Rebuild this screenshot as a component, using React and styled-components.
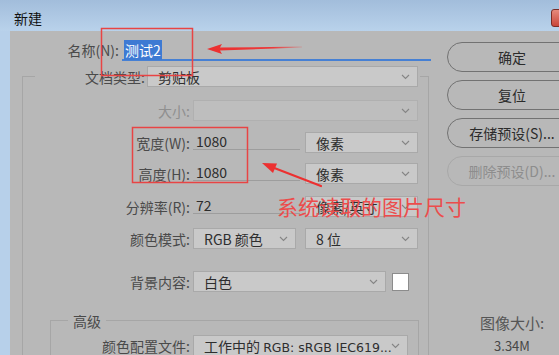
import styled, { createGlobalStyle } from "styled-components";

const GlobalStyle = createGlobalStyle`
  html, body { margin: 0; padding: 0; background: #b8b8b8; }
  body {
    width: 559px;
    height: 355px;
    overflow: hidden;
    font-family: "Noto Sans CJK SC", "Noto Sans", sans-serif;
  }
  * { box-sizing: border-box; }
`;

const Window = styled.div`
  position: relative;
  width: 559px;
  height: 355px;
  overflow: hidden;
  background: #b7d0ea;
  display: flex;
  flex-direction: column;
`;

const TitleBar = styled.div`
  height: 31px;
  flex-shrink: 0;
  display: flex;
  align-items: flex-start;
  padding: 8px 0 0 14px;
  background: linear-gradient(to bottom, #a2bddb, #b9d2eb);
  overflow: hidden;
`;

const Title = styled.span`
  font-size: 14px;
  line-height: 20px;
  color: #111;
`;

const CloseButton = styled.div`
  flex-shrink: 0;
  width: 30px;
  height: 18px;
  margin: 1px -22px 0 auto;
  border: 1px solid #7b2c26;
  border-radius: 3px;
  background: linear-gradient(to bottom, #e6897c, #c9453a);
`;

const Body = styled.div`
  flex: 1;
  margin-left: 10px;
  background: #b8b8b8;
  display: flex;
  overflow: hidden;
`;

const LeftPane = styled.div`
  width: 437px;
  flex-shrink: 0;
  padding-top: 10px;
  display: flex;
  flex-direction: column;
`;

const RightPane = styled.div`
  width: 130px;
  flex-shrink: 0;
  padding-top: 11px;
  display: flex;
  flex-direction: column;
`;

const NameRow = styled.div`
  display: flex;
  align-items: flex-start;
  height: 20px;
`;

const Label = styled.span`
  width: ${(p) => p.$w}px;
  flex-shrink: 0;
  text-align: right;
  font-size: 14px;
  line-height: 18px;
  white-space: nowrap;
  color: ${(p) => (p.$disabled ? "#8f8f8f" : "#4a4a4a")};
`;

const NameInput = styled.div`
  width: 309px;
  height: 20px;
  margin-left: 3px;
  padding: 1px 0 0 2px;
  border-bottom: 2px solid #4680d4;
  font-size: 14px;
  line-height: 16px;
`;

const Selected = styled.span`
  background: #3d7ad3;
  color: #fff;
  padding: 0 1px;
`;

const Group = styled.fieldset`
  width: ${(p) => p.$w}px;
  margin: ${(p) => p.$m};
  padding: ${(p) => p.$p};
  min-inline-size: 0;
  border: 1px solid #a6a6a6;
  border-bottom: none;
`;

const Legend = styled.legend`
  margin-left: ${(p) => p.$ml}px;
  padding: 0 ${(p) => p.$px}px;
`;

const LegendRow = styled.div`
  display: flex;
  align-items: center;
  gap: 2px;
`;

const LegendText = styled.span`
  font-size: 14px;
  line-height: 20px;
  color: #4a4a4a;
`;

const Row = styled.div`
  display: flex;
  align-items: center;
  height: 21px;
  margin-top: ${(p) => p.$mt || 0}px;
`;

const Control = styled.div`
  display: flex;
  align-items: center;
  margin-left: ${(p) => p.$ml ?? 3}px;
`;

const Select = styled.div`
  width: ${(p) => p.$w}px;
  height: 21px;
  flex-shrink: 0;
  display: flex;
  align-items: center;
  padding: 0 7px 0 ${(p) => p.$pl ?? 10}px;
  margin-left: ${(p) => p.$ml || 0}px;
  background: ${(p) => (p.$disabled ? "#bebebe" : "#c9c9c9")};
  border: 1px solid ${(p) => (p.$disabled ? "#b0b0b0" : "#a9a9a9")};
  font-size: 14px;
  color: #2e2e2e;
  white-space: nowrap;
  overflow: hidden;
`;

const SelectText = styled.span`
  flex: 1;
  overflow: hidden;
`;

const Latin = styled.span`
  font-family: "DejaVu Sans", "Noto Sans", sans-serif;
  font-size: 12.5px;
`;

const Field = styled.div`
  width: ${(p) => p.$w}px;
  height: 18px;
  align-self: flex-start;
  padding: 1px 0 0 3px;
  border-bottom: 1px solid #9d9d9d;
  font-size: 14px;
  line-height: 17px;
  color: #2c2c2c;
`;

const Swatch = styled.div`
  width: 17px;
  height: 18px;
  margin-left: 6px;
  background: #fff;
  border: 1px solid #8c8c8c;
`;

const Button = styled.div`
  width: 130px;
  height: 30px;
  border-radius: 15px;
  border: 1px solid ${(p) => (p.$disabled ? "#a8a8a8" : "#727272")};
  display: flex;
  align-items: center;
  justify-content: center;
  font-size: 14px;
  color: ${(p) => (p.$disabled ? "#8d8d8d" : "#2b2b2b")};
  & + & {
    margin-top: 8px;
  }
`;

const InfoTitle = styled.div`
  margin-top: 127px;
  text-align: center;
  font-size: 15px;
  line-height: 20px;
  color: #555;
`;

const InfoValue = styled.div`
  margin-top: 4px;
  text-align: center;
  font-size: 13px;
  line-height: 18px;
  color: #474747;
`;

const Overlay = styled.div`
  position: absolute;
  inset: 0;
  pointer-events: none;
`;

const Note = styled.div`
  position: absolute;
  left: 277px;
  top: 193px;
  font-size: 21px;
  line-height: 26px;
  color: #ec4c4c;
  white-space: nowrap;
`;

function Chevron() {
  return (
    <svg width="9" height="6" viewBox="0 0 9 6" style={{ flexShrink: 0 }}>
      <polyline points="1,1 4.5,4.5 8,1" fill="none" stroke="#858585" strokeWidth="1.1" />
    </svg>
  );
}

function Dropdown({ children, ...rest }) {
  return (
    <Select {...rest}>
      <SelectText>{children}</SelectText>
      <Chevron />
    </Select>
  );
}

function Annotations() {
  return (
    <Overlay>
      <svg width="559" height="355" viewBox="0 0 559 355">
        <defs>
          <linearGradient id="tail" x1="207" y1="0" x2="302" y2="0" gradientUnits="userSpaceOnUse">
            <stop offset="0" stopColor="#ec2f2f" />
            <stop offset="0.7" stopColor="#ec3a3a" />
            <stop offset="1" stopColor="#ec3a3a" stopOpacity="0.2" />
          </linearGradient>
        </defs>
        <rect x="101.5" y="28.5" width="91" height="47" fill="none" stroke="#e84444" strokeWidth="1.5" />
        <polygon points="207,49 222,44 220,47.6 302,46.6 302,47.6 220,50.6 222,54" fill="url(#tail)" />
        <rect x="132.5" y="127.5" width="115" height="55" fill="none" stroke="#e84444" strokeWidth="1.5" />
        <line x1="273" y1="167.5" x2="321" y2="186" stroke="#ec3030" strokeWidth="2.2" strokeLinecap="round" />
        <polygon points="262,163 277,163.4 273,173" fill="#ec3030" />
      </svg>
      <Note>系统读取的图片尺寸</Note>
    </Overlay>
  );
}

export default function App() {
  return (
    <>
      <GlobalStyle />
      <Window>
        <TitleBar>
          <Title>新建</Title>
          <CloseButton />
        </TitleBar>
        <Body>
          <LeftPane>
            <NameRow>
              <Label $w={109}>名称(N):</Label>
              <NameInput>
                <Selected>测试2</Selected>
              </NameInput>
            </NameRow>

            <Group $w={407} $m="5px 0 0 12px" $p="13px 0 0 0">
              <Legend $ml={12} $px={2}>
                <LegendRow>
                  <Label $w={108}>文档类型:</Label>
                  <Dropdown $w={271}>剪贴板</Dropdown>
                </LegendRow>
              </Legend>

              <Row>
                <Label $w={167} $disabled>大小:</Label>
                <Control>
                  <Dropdown $w={225} $disabled />
                </Control>
              </Row>

              <Row $mt={11}>
                <Label $w={167}>宽度(W):</Label>
                <Control>
                  <Field $w={107}>1080</Field>
                  <Dropdown $w={113} $ml={5}>像素</Dropdown>
                </Control>
              </Row>

              <Row $mt={10}>
                <Label $w={167}>高度(H):</Label>
                <Control>
                  <Field $w={107}>1080</Field>
                  <Dropdown $w={113} $ml={5}>像素</Dropdown>
                </Control>
              </Row>

              <Row $mt={12}>
                <Label $w={167}>分辨率(R):</Label>
                <Control>
                  <Field $w={107}>72</Field>
                  <Dropdown $w={113} $ml={5}>像素/英寸</Dropdown>
                </Control>
              </Row>

              <Row $mt={11}>
                <Label $w={167}>颜色模式:</Label>
                <Control>
                  <Dropdown $w={103}>RGB 颜色</Dropdown>
                  <Dropdown $w={113} $ml={9}>8 位</Dropdown>
                </Control>
              </Row>

              <Row $mt={22}>
                <Label $w={167}>背景内容:</Label>
                <Control>
                  <Dropdown $w={193}>白色</Dropdown>
                  <Swatch />
                </Control>
              </Row>

              <Group $w={369} $m="16px 0 0 27px" $p="3px 0 0 0">
                <Legend $ml={17} $px={5}>
                  <LegendText>高级</LegendText>
                </Legend>
                <Row>
                  <Label $w={139}>颜色配置文件:</Label>
                  <Control>
                    <Dropdown $w={215}>
                      工作中的 <Latin>RGB: sRGB IEC619...</Latin>
                    </Dropdown>
                  </Control>
                </Row>
              </Group>
            </Group>
          </LeftPane>

          <RightPane>
            <Button>确定</Button>
            <Button>复位</Button>
            <Button>存储预设(S)...</Button>
            <Button $disabled>删除预设(D)...</Button>
            <InfoTitle>图像大小:</InfoTitle>
            <InfoValue>3.34M</InfoValue>
          </RightPane>
        </Body>
        <Annotations />
      </Window>
    </>
  );
}
